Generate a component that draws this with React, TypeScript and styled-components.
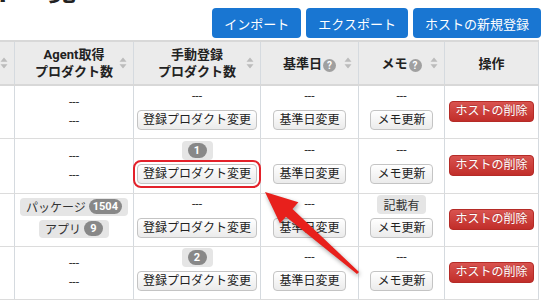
import styled, { createGlobalStyle } from "styled-components";

const GlobalStyle = createGlobalStyle`
  html, body {
    margin: 0;
    padding: 0;
    background: #fff;
  }
  body {
    font-family: Roboto, "Noto Sans CJK JP", sans-serif;
    color: #333;
  }
`;

const Page = styled.div`
  position: relative;
  width: 550px;
  height: 300px;
  overflow: hidden;
  background: #fff;
`;

const Title = styled.h1`
  margin: -26px 0 0 -64px;
  height: 34px;
  font-size: 28px;
  line-height: 36px;
  font-weight: bold;
  color: #222;
  white-space: nowrap;
`;

const Toolbar = styled.div`
  display: flex;
  justify-content: flex-end;
  gap: 5px;
  padding-right: 9px;
  margin-bottom: 2px;
`;

const PrimaryButton = styled.button`
  height: 30px;
  padding: 0 12px;
  border: none;
  border-radius: 4px;
  background: #1976d2;
  color: #fff;
  font-family: inherit;
  font-size: 13px;
`;

const Table = styled.table`
  border-collapse: collapse;
  table-layout: fixed;
  width: 624px;
  margin-left: -86px;
  font-size: 12px;
`;

const Col = styled.col<{ $w: number }>`
  width: ${(p) => p.$w}px;
`;

const Th = styled.th`
  position: relative;
  height: 42px;
  padding: 0 4px;
  background: #ebebeb;
  border: 1px solid #d5dadf;
  border-top: 2px solid #d8d8d8;
  border-bottom: 2px solid #d8d8d8;
  color: #222;
  font-size: 13px;
  font-weight: bold;
  line-height: 17px;
  text-align: center;
`;

const SortMark = styled.svg`
  position: absolute;
  right: 6px;
  top: 50%;
  margin-top: -6px;
`;

const Help = styled.span`
  display: inline-flex;
  align-items: center;
  justify-content: center;
  width: 13px;
  height: 13px;
  margin-left: 1px;
  border-radius: 50%;
  background: #a0a0a0;
  color: #fff;
  font-size: 10px;
  font-weight: bold;
  vertical-align: -1px;
`;

const Tr = styled.tr<{ $h: number }>`
  height: ${(p) => p.$h}px;
`;

const Td = styled.td`
  padding: 0 4px;
  border: 1px solid #dcdcdc;
  border-left-color: #d5dadf;
  border-right-color: #d5dadf;
  text-align: center;
  vertical-align: middle;
`;

const Stack = styled.div<{ $gap?: number; $pb?: number }>`
  display: flex;
  flex-direction: column;
  align-items: center;
  gap: ${(p) => p.$gap ?? 0}px;
  padding-bottom: ${(p) => p.$pb ?? 0}px;
`;

const Dash = styled.div`
  line-height: 19px;
  color: #333;
`;

const Button = styled.button<{ $highlight?: boolean; $wide?: boolean }>`
  height: 20px;
  padding: 0 ${(p) => (p.$wide ? 6 : 5)}px;
  border: 1px solid #c4c4c4;
  border-radius: 4px;
  background: linear-gradient(#ffffff, #ebebeb);
  color: #222;
  font-family: inherit;
  font-size: 12px;
  line-height: 18px;
  white-space: nowrap;
  outline: ${(p) => (p.$highlight ? "2px solid #e3212a" : "none")};
  outline-offset: 2px;
`;

const DangerButton = styled.button`
  height: 21px;
  padding: 0 5px;
  border: 1px solid #b52b27;
  border-radius: 4px;
  background: linear-gradient(#d9534f, #c12e2a);
  color: #fff;
  font-family: inherit;
  font-size: 12px;
  line-height: 19px;
  text-shadow: 0 -1px 0 rgba(0, 0, 0, 0.2);
  white-space: nowrap;
`;

const Label = styled.span<{ $h?: number }>`
  display: inline-flex;
  align-items: center;
  gap: 3px;
  height: ${(p) => p.$h ?? 18}px;
  padding: 0 6px;
  border-radius: 4px;
  background: #e5e5e5;
  color: #333;
  font-size: 12px;
  white-space: nowrap;
`;

const Badge = styled.span`
  display: inline-block;
  min-width: 19px;
  height: 15px;
  padding: 0 4px;
  box-sizing: border-box;
  border-radius: 8px;
  background: #888;
  color: #fff;
  font-size: 11px;
  font-weight: bold;
  line-height: 15px;
  text-align: center;
`;

const Overlay = styled.svg`
  position: absolute;
  left: 0;
  top: 0;
  pointer-events: none;
  filter: drop-shadow(1px 2px 2px rgba(0, 0, 0, 0.35));
`;

function Sort() {
  return (
    <SortMark width="8" height="12" viewBox="0 0 8 12">
      <path d="M4 0.5 L7.5 4.8 H0.5 Z M0.5 7.2 H7.5 L4 11.5 Z" fill="#bcbcbc" />
    </SortMark>
  );
}

type Row = {
  h: number;
  agent?: { name: string; count: number }[];
  manual?: number;
  highlight?: boolean;
  memo?: string;
};

const rows: Row[] = [
  { h: 53 },
  { h: 55, manual: 1, highlight: true },
  {
    h: 53,
    agent: [
      { name: "パッケージ", count: 1504 },
      { name: "アプリ", count: 9 },
    ],
    memo: "記載有",
  },
  { h: 53, manual: 2 },
];

export default function App() {
  return (
    <Page>
      <GlobalStyle />
      <Title>ホスト一覧</Title>
      <Toolbar>
        <PrimaryButton>インポート</PrimaryButton>
        <PrimaryButton>エクスポート</PrimaryButton>
        <PrimaryButton>ホストの新規登録</PrimaryButton>
      </Toolbar>
      <Table>
        <colgroup>
          <Col $w={100} />
          <Col $w={119} />
          <Col $w={127} />
          <Col $w={98} />
          <Col $w={86} />
          <Col $w={94} />
        </colgroup>
        <thead>
          <tr>
            <Th>
              <Sort />
            </Th>
            <Th>
              Agent取得
              <br />
              プロダクト数
              <Sort />
            </Th>
            <Th>
              手動登録
              <br />
              プロダクト数
              <Sort />
            </Th>
            <Th>
              基準日<Help>?</Help>
              <Sort />
            </Th>
            <Th>
              メモ<Help>?</Help>
              <Sort />
            </Th>
            <Th>操作</Th>
          </tr>
        </thead>
        <tbody>
          {rows.map((row, i) => (
            <Tr key={i} $h={row.h}>
              <Td />
              <Td>
                {row.agent ? (
                  <Stack $gap={4} $pb={4}>
                    {row.agent.map((a) => (
                      <Label key={a.name}>
                        {a.name}
                        <Badge>{a.count}</Badge>
                      </Label>
                    ))}
                  </Stack>
                ) : (
                  <Stack>
                    <Dash>---</Dash>
                    <Dash>---</Dash>
                  </Stack>
                )}
              </Td>
              <Td>
                <Stack $gap={4} $pb={6}>
                  {row.manual ? (
                    <Label $h={19}>
                      <Badge>{row.manual}</Badge>
                    </Label>
                  ) : (
                    <Dash>---</Dash>
                  )}
                  <Button $highlight={row.highlight}>登録プロダクト変更</Button>
                </Stack>
              </Td>
              <Td>
                <Stack $gap={4} $pb={6}>
                  <Dash>---</Dash>
                  <Button>基準日変更</Button>
                </Stack>
              </Td>
              <Td>
                <Stack $gap={4} $pb={6}>
                  {row.memo ? <Label $h={19}>{row.memo}</Label> : <Dash>---</Dash>}
                  <Button $wide>メモ更新</Button>
                </Stack>
              </Td>
              <Td>
                <DangerButton>ホストの削除</DangerButton>
              </Td>
            </Tr>
          ))}
        </tbody>
      </Table>
      <Overlay width="550" height="300" viewBox="0 0 550 300">
        <polygon
          points="265,192 298.4,202.3 292.5,209.1 359,271.9 357,274.1 285.9,216.7 280,223.5"
          fill="#e8201c"
        />
      </Overlay>
    </Page>
  );
}
